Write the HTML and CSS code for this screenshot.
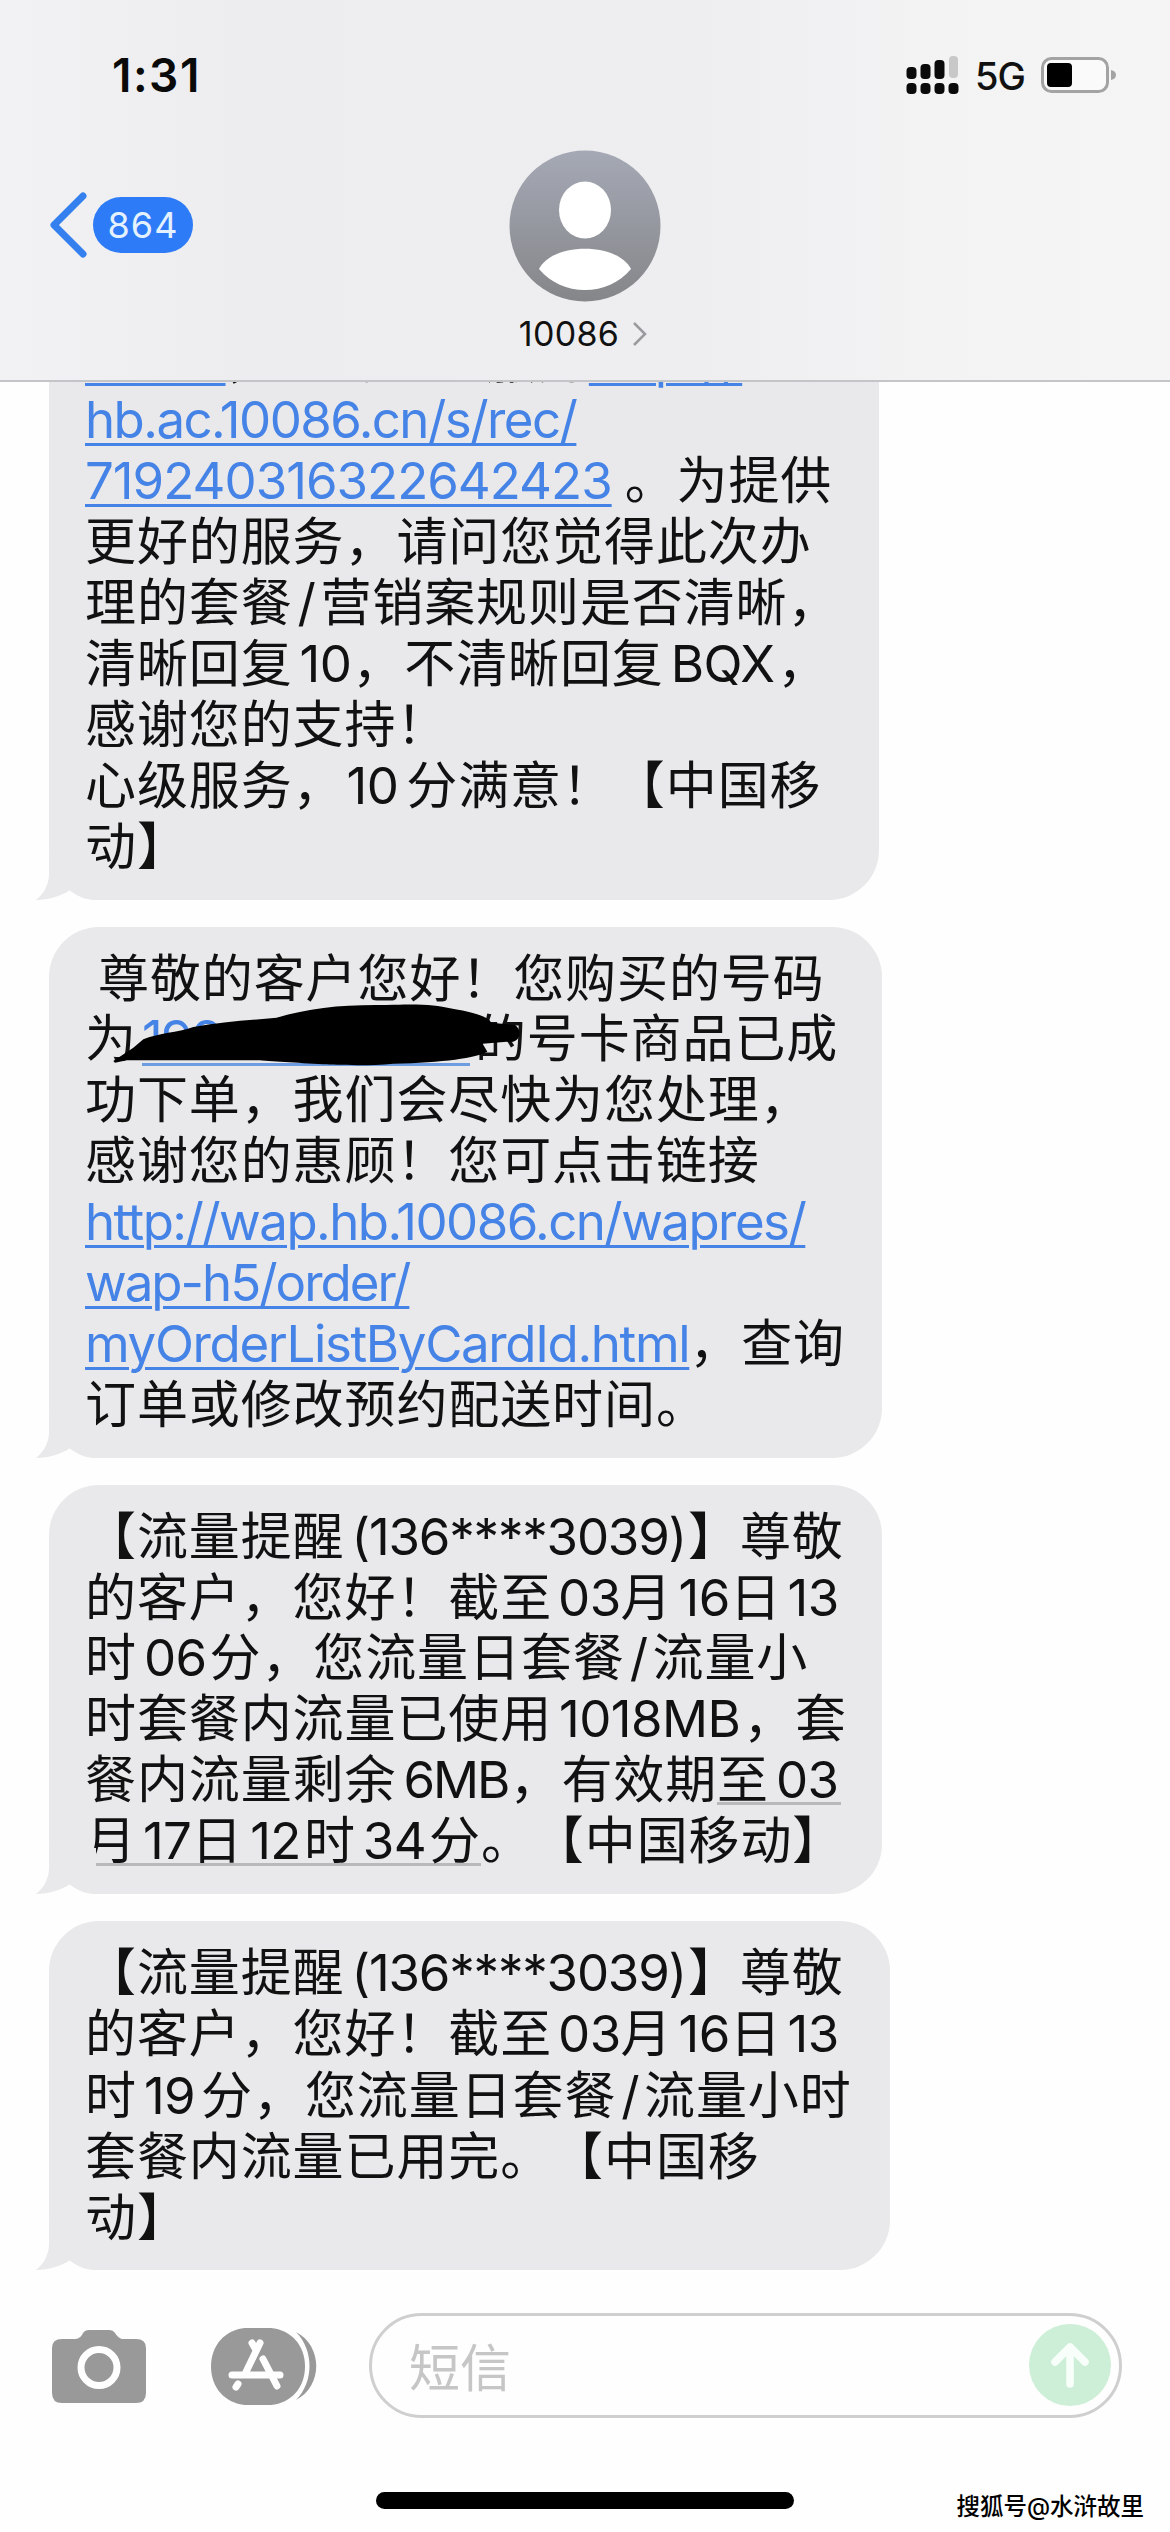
FILE: index.html
```html
<!DOCTYPE html>
<html lang="zh-CN">
<head>
<meta charset="utf-8">
<title>10086</title>
<link rel="stylesheet" href="styles.css">
</head>
<body>
<div class="phone">
  <header class="header">
    <div class="status">
      <span class="time">1:31</span>
      <div class="indicators">
        <svg class="signal" width="54" height="38" viewBox="0 0 54 38">
          <g fill="#0a0a0a">
            <rect x="0.500" y="11" width="10" height="12" rx="4"/><rect x="14.500" y="8" width="10" height="15" rx="4"/><rect x="28.500" y="4" width="10" height="19" rx="4"/>
            <rect x="0.500" y="27" width="10" height="11" rx="4"/><rect x="14.500" y="27" width="10" height="11" rx="4"/><rect x="28.500" y="27" width="10" height="11" rx="4"/><rect x="42.500" y="27" width="10" height="11" rx="4"/>
          </g>
          <rect x="43" y="0" width="9" height="22" rx="4" fill="#c8c8c8"/>
        </svg>
        <span class="network">5G</span>
        <svg class="battery" width="78" height="38" viewBox="0 0 78 38">
          <rect x="2.5" y="2.5" width="65" height="33" rx="9" fill="#fafafa" stroke="#a3a3a3" stroke-width="3"/>
          <rect x="7" y="7" width="25" height="24" rx="4"/>
          <path d="M71 14q5 1 5 5t-5 5z" fill="#a3a3a3"/>
        </svg>
      </div>
    </div>
    <div class="nav">
      <div class="back">
        <svg width="40" height="68" viewBox="0 0 40 68" fill="none" stroke="#3380ee" stroke-width="7" stroke-linecap="round" stroke-linejoin="round"><path d="M35 5L6 34l29 29"/></svg>
        <span class="badge">864</span>
      </div>
      <div class="contact">
        <svg width="152" height="152" viewBox="0 0 152 152">
          <defs><linearGradient id="avatar" x1="0" y1="0" x2="0" y2="1"><stop offset="0" stop-color="#a5a9b5"/><stop offset="1" stop-color="#858689"/></linearGradient></defs>
          <circle cx="76" cy="76" r="75.5" fill="url(#avatar)"/>
          <ellipse cx="76" cy="60" rx="26" ry="28.500" fill="#fff"/>
          <path d="M30 119C44 92 108 92 122 119C110 133 94 140 76 140S42 133 30 119z" fill="#fff"/>
        </svg>
        <div class="name"><span>10086</span><svg width="16" height="26" viewBox="0 0 16 26" fill="none" stroke="#9a9a9e" stroke-width="2.500"><path d="M2 2l11 11L2 24"/></svg></div>
      </div>
    </div>
  </header>

  <main class="thread">
    <div class="bubble b1">
      <p><a>10086</a>，查询您的服务<a class="scheme">http://</a></p>
      <p><a>hb.ac.10086.cn/s/rec/</a></p>
      <p><a class="digits">719240316322642423</a><span class="gap"></span>。为提供</p>
      <p>更好的服务，请问您觉得此次办</p>
      <p>理的套餐<i class="slash">/</i>营销案规则是否清晰，</p>
      <p>清晰回复<i class="ten">10</i>，不清晰回复<i>BQX</i>，</p>
      <p>感谢您的支持！</p>
      <p>心级服务，<i class="after-comma">10</i>分满意！【中国移</p>
      <p>动】</p>
      <svg class="tail" width="60" height="46" viewBox="0 0 60 46"><path d="M13 0V20C13 30 8 40 0 46C12 46 26 42 34 36C40 42 50 46 60 46V0z"/></svg>
    </div>
    <div class="bubble b2">
      <p><span class="gap"></span>尊敬的客户您好！您购买的号码</p>
      <p class="masked">为<a class="phone-no">198</a>的号卡商品已成
        <svg class="scribble" width="430" height="80" viewBox="0 0 1290 240"><path d="M10 180L70 140L100 115C150 95 200 95 250 78C330 62 420 58 500 50C600 20 700 10 830 12C930 8 980 12 1020 22C1100 35 1140 50 1143 65L1215 72Q1232 85 1228 105Q1218 128 1190 122L1118 128L1132 152C1100 170 1000 185 850 188C780 195 680 192 640 190C560 186 480 180 440 178L50 178L15 185z"/></svg>
      </p>
      <p>功下单，我们会尽快为您处理，</p>
      <p>感谢您的惠顾！您可点击链接</p>
      <p><a>http://wap.hb.10086.cn/wapres/</a></p>
      <p><a class="order">wap-h5/order/</a></p>
      <p><a class="file">myOrderListByCardId.html</a>，查询</p>
      <p>订单或修改预约配送时间。</p>
      <svg class="tail" width="60" height="46" viewBox="0 0 60 46"><path d="M13 0V20C13 30 8 40 0 46C12 46 26 42 34 36C40 42 50 46 60 46V0z"/></svg>
    </div>
    <div class="bubble b3">
      <p>【流量提醒<i class="number">(136****3039)</i>】尊敬</p>
      <p>的客户，您好！截至<i class="tight">03</i>月<i class="tight">16</i>日<i class="tight">13</i></p>
      <p>时<i>06</i>分，您流量日套餐<i class="slash">/</i>流量小</p>
      <p>时套餐内流量已使用<i>1018MB</i>，套</p>
      <p>餐内流量剩余<i class="size">6MB</i>，有效期<u>至<i>03</i></u></p>
      <p><u>月<i class="tight">17</i>日<i>12</i>时<i>34</i>分</u>。【中国移动】</p>
      <svg class="tail" width="60" height="46" viewBox="0 0 60 46"><path d="M13 0V20C13 30 8 40 0 46C12 46 26 42 34 36C40 42 50 46 60 46V0z"/></svg>
    </div>
    <div class="bubble b4">
      <p>【流量提醒<i class="number">(136****3039)</i>】尊敬</p>
      <p>的客户，您好！截至<i class="tight">03</i>月<i class="tight">16</i>日<i class="tight">13</i></p>
      <p>时<i class="nineteen">19</i>分，您流量日套餐<i class="slash">/</i>流量小时</p>
      <p>套餐内流量已用完。【中国移</p>
      <p>动】</p>
      <svg class="tail" width="60" height="46" viewBox="0 0 60 46"><path d="M13 0V20C13 30 8 40 0 46C12 46 26 42 34 36C40 42 50 46 60 46V0z"/></svg>
    </div>
  </main>

  <footer class="compose">
    <svg class="camera" width="94" height="73" viewBox="0 0 94 73">
      <path d="M10 9H24Q29 8 31 3Q33 0 37 0H57Q61 0 63 3Q66 8 70 9H84Q94 9 94 18V63Q94 73 84 73H10Q0 73 0 63V18Q0 9 10 9z" fill="#999"/>
      <ellipse cx="47" cy="37.500" rx="18" ry="18" fill="none" stroke="#fff" stroke-width="7"/>
    </svg>
    <svg class="apps" width="107" height="77" viewBox="0 0 107 77">
      <path d="M34 0H60C80 2 94 17 94 38.500S80 75 60 77H34C14 75 0 60 0 38.500S14 2 34 0z" fill="#999"/>
      <path d="M85 4C112 18 112 58 85 72C103 54 103 22 85 4z" fill="#999"/>
      <g stroke="#fff" stroke-width="7" stroke-linecap="round" fill="none"><path d="M49 15L34 46M41 15l4 7M21 47H69M52 31L66 58M27 56l-2 3"/></g>
    </svg>
    <div class="field"><span>短信</span>
      <svg class="send" width="82" height="82" viewBox="0 0 82 82"><circle cx="41" cy="41" r="41" fill="#cdefd8"/><path d="M41 60V23M26 38L41 23L56 38" fill="none" stroke="#f8fffa" stroke-width="7.500" stroke-linecap="round" stroke-linejoin="round"/></svg>
    </div>
  </footer>
  <div class="bottom"><div class="home"></div><span class="watermark">搜狐号@水浒故里</span></div>
</div>
</body>
</html>
```
FILE: styles.css
```css
* { box-sizing: border-box; }
body { margin: 0; background: #fefefe; }
p { margin: 0; }
svg { display: block; flex: none; }

.phone {
  width: 1170px;
  height: 2532px;
  display: flex;
  flex-direction: column;
  overflow: hidden;
  background: #fefefe;
  color: #111;
  font-family: Inter, "Noto Sans CJK SC", sans-serif;
  text-spacing-trim: space-all;
}

.header {
  flex: none;
  height: 382px;
  border-bottom: 2px solid #c3c5c9;
  background: linear-gradient(90deg, #f2f2f4 0%, #ededef 20%, #eeeef0 60%, #f3f3f4 80%, #f5f5f6 100%);
}
.status {
  height: 150px;
  padding: 0 52px 0 112px;
  display: flex;
  justify-content: space-between;
  align-items: center;
}
.time { font-size: 46px; font-weight: 600; line-height: 56px; letter-spacing: 1.5px; color: #0a0a0a; }
.indicators { display: flex; align-items: center; }
.network { width: 52px; margin: 2px 13px 0 15px; font-size: 38px; line-height: 44px; font-weight: 500; letter-spacing: -1px; }
.nav { display: grid; grid-template-columns: 1fr 300px 1fr; }
.back { display: flex; align-items: center; height: 68px; margin: 41px 0 0 48px; gap: 5px; }
.badge {
  width: 100px; height: 56px; border-radius: 28px;
  background: #2d7bf6; color: #e4f2ff;
  font-size: 36px; line-height: 56px; text-align: center; letter-spacing: 1px;
}
.contact { display: flex; flex-direction: column; align-items: center; }
.name { display: flex; align-items: center; gap: 13px; margin: 11px 0 0 -3px; font-size: 34px; line-height: 42px; letter-spacing: .3px; }

.thread {
  flex: none;
  height: 1888px;
  overflow: hidden;
  padding-left: 49px;
  display: flex;
  flex-direction: column;
  align-items: flex-start;
  justify-content: flex-end;
  gap: 27px;
}
.bubble {
  position: relative;
  flex: none;
  padding: 22px 0 22px 36px;
  border-radius: 50px;
  background: #e9e9eb;
  font-size: 51px;
  line-height: 60.9px;
  letter-spacing: .9px;
  white-space: nowrap;
}
.bubble p { height: 60.9px; }
.b1 { width: 830px; }
.b2, .b3 { width: 833px; }
.b4 { width: 841px; height: 349px; }
.bubble.b4 p { height: 61.3px; }

/* Latin runs inside Chinese text */
.bubble i { font-style: normal; margin: 0 3px 0 7px; letter-spacing: -.6px; }
.bubble i.tight { margin: 0 0 0 6px; }
.bubble i.slash { margin: 0 5px; }
.bubble i.ten { margin: 0 1px 0 7px; }
.bubble i.after-comma { margin: 0 8px 0 2px; }
.bubble i.nineteen { margin: 0 6px 0 7px; }
.bubble i.size { letter-spacing: -2px; margin-right: 1px; }
.bubble i.number { letter-spacing: -1.2px; margin: 0 2px 0 7px; }

.bubble a {
  color: #4583e6;
  letter-spacing: -1.55px;
  text-decoration: underline;
  text-decoration-thickness: 3px;
  text-underline-offset: 5px;
}
.bubble a.digits { letter-spacing: -1px; }
.bubble a.order { letter-spacing: -2px; }
.bubble a.file { letter-spacing: -1.35px; }
.bubble a.scheme { letter-spacing: 1.2px; }
.bubble u {
  text-decoration: none;
  background: linear-gradient(#b9b9bc, #b9b9bc) 0 53px / 100% 3px no-repeat;
}
.gap { display: inline-block; width: 13px; }
.tail { position: absolute; left: -13px; bottom: 0; fill: #e9e9eb; }
.masked { position: relative; }
.bubble .phone-no {
  display: inline-block;
  width: 328px;
  height: 57px;
  margin: 0 5px;
  vertical-align: top;
  text-decoration: none;
  border-bottom: 3px solid #6d9ce0;
}
.scribble { position: absolute; left: 25px; top: -8px; }

.compose {
  flex: none;
  height: 192px;
  padding: 43px 48px 0 52px;
  display: flex;
  align-items: flex-start;
}
.camera { margin-top: 17px; }
.apps { margin: 15px 0 0 65px; }
.field {
  width: 753px; height: 105px; margin-left: 51px;
  padding: 0 8px 2px 37px;
  display: flex; align-items: center; justify-content: space-between;
  border: 3px solid #cfcfcf; border-radius: 53px;
  color: #c6c6c6; font-size: 51px;
}
.send { margin-top: 1px; }
.bottom { position: relative; flex: 1; display: flex; justify-content: center; align-items: flex-start; padding-top: 30px; }
.home { width: 418px; height: 17px; border-radius: 9px; background: #000; }
.watermark {
  position: absolute; right: 26px; top: 28px;
  font-size: 23.500px; line-height: 34px; font-weight: 500; color: #000;
}
```
